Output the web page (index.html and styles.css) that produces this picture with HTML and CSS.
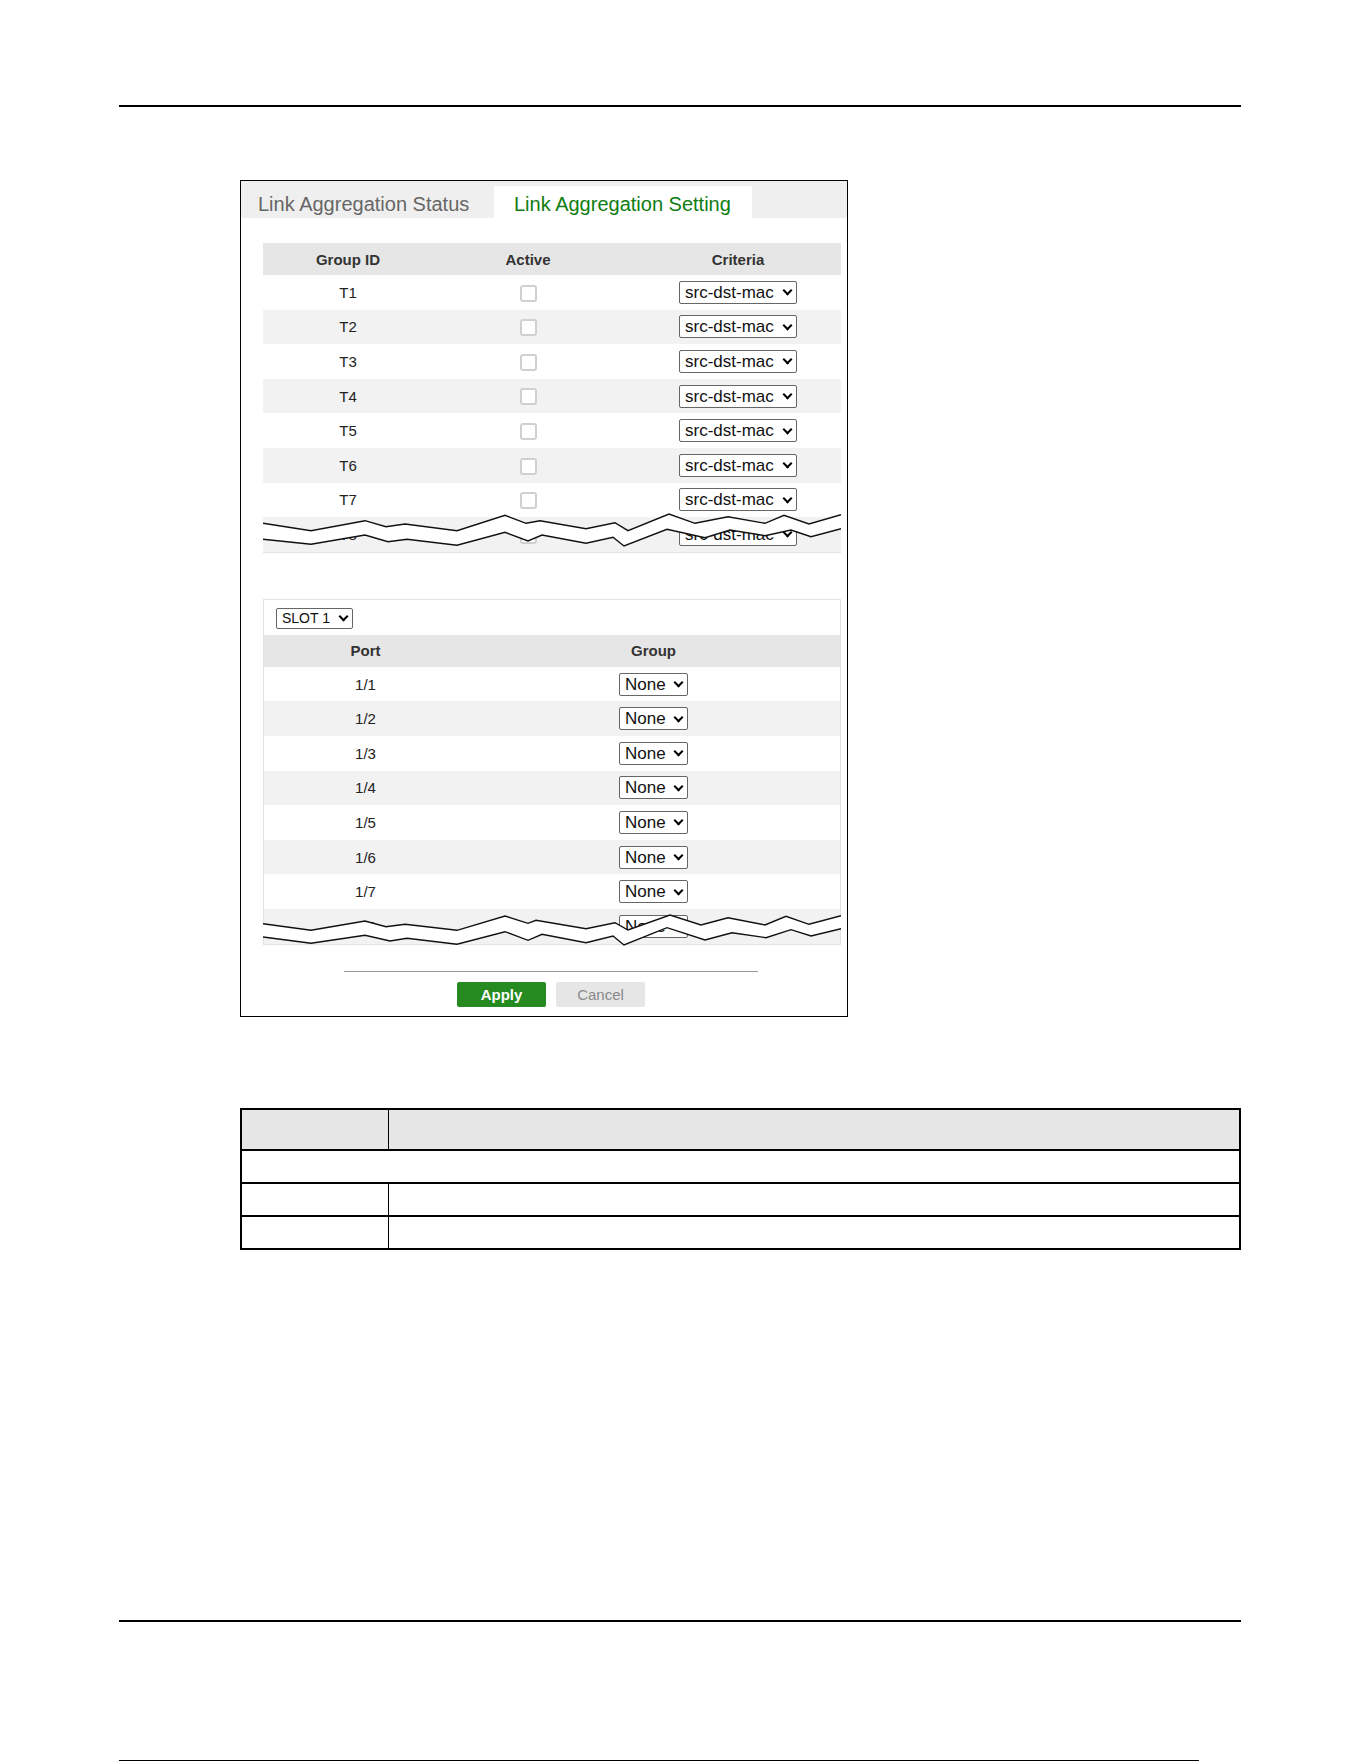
FILE: index.html
```html
<!DOCTYPE html>
<html lang="en">
<head>
  <meta charset="UTF-8">
  <meta name="viewport" content="width=device-width, initial-scale=1.0">
  <title>Link Aggregation Setting</title>
  <link rel="stylesheet" href="styles.css">
</head>
<body>

  <div class="page-rule top-rule"></div>

  <div class="screen">
    <div class="tabs">
      <div class="tab">Link Aggregation Status</div>
      <div class="tab active">Link Aggregation Setting</div>
    </div>

    <div class="screen-body">

      <div class="cut-wrap">
        <table class="grid criteria-grid">
          <colgroup><col class="c-id"><col class="c-active"><col></colgroup>
          <thead>
            <tr><th>Group ID</th><th>Active</th><th class="crit">Criteria</th></tr>
          </thead>
          <tbody>
            <tr><td>T1</td><td><input type="checkbox"></td><td class="crit"><span class="dropdown"><select class="criteria"><option>src-dst-mac</option></select></span></td></tr>
            <tr><td>T2</td><td><input type="checkbox"></td><td class="crit"><span class="dropdown"><select class="criteria"><option>src-dst-mac</option></select></span></td></tr>
            <tr><td>T3</td><td><input type="checkbox"></td><td class="crit"><span class="dropdown"><select class="criteria"><option>src-dst-mac</option></select></span></td></tr>
            <tr><td>T4</td><td><input type="checkbox"></td><td class="crit"><span class="dropdown"><select class="criteria"><option>src-dst-mac</option></select></span></td></tr>
            <tr><td>T5</td><td><input type="checkbox"></td><td class="crit"><span class="dropdown"><select class="criteria"><option>src-dst-mac</option></select></span></td></tr>
            <tr><td>T6</td><td><input type="checkbox"></td><td class="crit"><span class="dropdown"><select class="criteria"><option>src-dst-mac</option></select></span></td></tr>
            <tr><td>T7</td><td><input type="checkbox"></td><td class="crit"><span class="dropdown"><select class="criteria"><option>src-dst-mac</option></select></span></td></tr>
            <tr><td>T8</td><td><input type="checkbox"></td><td class="crit"><span class="dropdown"><select class="criteria"><option>src-dst-mac</option></select></span></td></tr>
          </tbody>
        </table>
        <!-- torn edge: the list goes on past T8 -->
        <svg class="tear" width="578" height="44" viewBox="0 0 578 44">
          <polygon class="tear-fill" points="0,13.3 48,20.7 102,10.7 123,16.7 142,14 194,20.7 242,5.3 263,13.3 277,10.7 323,18.7 352,12.7 365,20.7 406,4 432,13.3 465,6.7 502,13.3 521,5.3 546,14 578,4.7 578,18.7 548,26.7 528,20 502,25.7 467,20 442,27.7 404,19.3 361,36 350,27.3 323,33.3 279,25 265,31 242,22.3 194,35.3 144,29.3 125,31.7 102,25 48,34.3 0,29.3"/>
          <polyline class="tear-line" points="0,13.3 48,20.7 102,10.7 123,16.7 142,14 194,20.7 242,5.3 263,13.3 277,10.7 323,18.7 352,12.7 365,20.7 406,4 432,13.3 465,6.7 502,13.3 521,5.3 546,14 578,4.7"/>
          <polyline class="tear-line" points="0,29.3 48,34.3 102,25 125,31.7 144,29.3 194,35.3 242,22.3 265,31 279,25 323,33.3 350,27.3 361,36 404,19.3 442,27.7 467,20 502,25.7 528,20 548,26.7 578,18.7"/>
        </svg>
      </div>

      <div class="port-box">
        <div class="slot-bar">
          <span class="dropdown"><select class="slot"><option>SLOT 1</option></select></span>
        </div>
        <div class="cut-wrap">
          <table class="grid port-grid">
            <colgroup><col class="c-port"><col></colgroup>
            <thead>
              <tr><th>Port</th><th>Group</th></tr>
            </thead>
            <tbody>
              <tr><td>1/1</td><td><span class="dropdown"><select class="group"><option>None</option></select></span></td></tr>
              <tr><td>1/2</td><td><span class="dropdown"><select class="group"><option>None</option></select></span></td></tr>
              <tr><td>1/3</td><td><span class="dropdown"><select class="group"><option>None</option></select></span></td></tr>
              <tr><td>1/4</td><td><span class="dropdown"><select class="group"><option>None</option></select></span></td></tr>
              <tr><td>1/5</td><td><span class="dropdown"><select class="group"><option>None</option></select></span></td></tr>
              <tr><td>1/6</td><td><span class="dropdown"><select class="group"><option>None</option></select></span></td></tr>
              <tr><td>1/7</td><td><span class="dropdown"><select class="group"><option>None</option></select></span></td></tr>
              <tr><td>1/8</td><td><span class="dropdown"><select class="group"><option>None</option></select></span></td></tr>
            </tbody>
          </table>
          <svg class="tear tear-ports" width="578" height="44" viewBox="0 0 578 44">
            <polygon class="tear-fill" points="0,20.7 48,27.3 102,18 123,23.7 142,21.3 194,27.3 242,13 265,20.3 273,17.3 323,25.7 352,19.7 365,27 407,12 438,22 465,14.7 502,22 523,13.3 546,21.3 578,12.7 578,25.7 548,33 528,26.7 503,34.7 469,29.7 442,37 404,24.7 361,42 350,33 323,39.7 279,31.3 265,37.3 242,28.7 194,41.3 144,35.3 127,38 102,32.3 48,40.3 0,34"/>
            <polyline class="tear-line" points="0,20.7 48,27.3 102,18 123,23.7 142,21.3 194,27.3 242,13 265,20.3 273,17.3 323,25.7 352,19.7 365,27 407,12 438,22 465,14.7 502,22 523,13.3 546,21.3 578,12.7"/>
            <polyline class="tear-line" points="0,34 48,40.3 102,32.3 127,38 144,35.3 194,41.3 242,28.7 265,37.3 279,31.3 323,39.7 350,33 361,42 404,24.7 442,37 469,29.7 503,34.7 528,26.7 548,33 578,25.7"/>
          </svg>
        </div>
      </div>

      <div class="actions-rule"></div>
      <div class="actions">
        <button class="btn apply">Apply</button>
        <button class="btn cancel">Cancel</button>
      </div>
    </div>
  </div>

  <table class="desc-table">
    <colgroup><col class="d-label"><col></colgroup>
    <thead>
      <tr><th></th><th></th></tr>
    </thead>
    <tbody>
      <tr><td colspan="2"></td></tr>
      <tr><td></td><td></td></tr>
      <tr><td></td><td></td></tr>
    </tbody>
  </table>

  <div class="page-rule bottom-rule"></div>
  <div class="page-edge"></div>

</body>
</html>
```

FILE: styles.css
```css
body {
  margin: 0;
  font-family: "Liberation Sans", Arial, sans-serif;
  color: #222;
  background: #fff;
}

/* page header / footer rules */
.page-rule {
  border-top: 2px solid #000;
  margin-left: 119px;
  width: 1122px;
}

.top-rule {
  margin-top: 105px;
}

.bottom-rule {
  margin-top: 370px;
}

.page-edge {
  margin: 138px 0 0 119px;
  width: 1080px;
  border-top: 1px solid #000;
}

/* captured screen */
.screen {
  width: 608px;
  box-sizing: border-box;
  margin: 73px 0 0 240px;
  border: 1px solid #000;
}

.tabs {
  display: flex;
  align-items: flex-end;
  height: 37px;
  background-color: #efefef;
}

.tab {
  height: 32px;
  line-height: 36px;
  font-size: 20px;
  color: #666;
  box-sizing: border-box;
  white-space: nowrap;
}

.tab:first-child {
  width: 253px;
  padding-left: 17px;
}

.tab.active {
  width: 258px;
  padding-left: 20px;
  background-color: #fff;
  color: #0f7d12;
}

.screen-body {
  padding: 25px 6px 9px 22px;
}

.cut-wrap {
  position: relative;
}

.grid {
  width: 100%;
  border-collapse: collapse;
  table-layout: fixed;
  font-size: 15px;
}

.grid th {
  height: 32px;
  padding: 0;
  background-color: #e6e6e6;
  font-weight: bold;
  color: #333;
  text-align: center;
}

.grid td {
  height: 34.6px;
  padding: 0;
  text-align: center;
  color: #222;
}

.grid tbody tr:nth-child(even) {
  background-color: #f2f2f2;
}

.criteria-grid {
  border-bottom: 1px solid #e2e2e2;
}

.c-id {
  width: 170px;
}

.c-active {
  width: 190px;
}

.grid .crit {
  padding-left: 12px;
}

.c-port {
  width: 203px;
}

input[type="checkbox"] {
  appearance: none;
  -webkit-appearance: none;
  width: 17px;
  height: 17px;
  margin: 0;
  border: 2px solid #d0d0d0;
  border-radius: 3px;
  background: #fff;
  vertical-align: middle;
}

/* select boxes with the small bold chevron */
.dropdown {
  position: relative;
  display: inline-block;
  vertical-align: middle;
}

.dropdown::after {
  content: "";
  position: absolute;
  right: 6px;
  top: 50%;
  width: 5px;
  height: 5px;
  margin-top: -5px;
  border-right: 2px solid #000;
  border-bottom: 2px solid #000;
  transform: rotate(45deg);
  pointer-events: none;
}

select {
  appearance: none;
  -webkit-appearance: none;
  display: block;
  box-sizing: border-box;
  height: 23px;
  margin: 0;
  padding: 0 0 0 5px;
  border: 1px solid #666;
  border-radius: 2px;
  background: #fff;
  font-family: "Liberation Sans", Arial, sans-serif;
  font-size: 17px;
  color: #111;
}

select.criteria {
  width: 118px;
}

select.group {
  width: 69px;
  padding-left: 5px;
}

select.slot {
  width: 77px;
  height: 21px;
  font-size: 14px;
  padding-left: 5px;
}

/* torn-off edge over the last row */
.tear {
  position: absolute;
  left: 0;
  top: 267px;
}

.tear-ports {
  left: -1px;
  top: 268px;
}

.tear-fill {
  fill: #fff;
}

.tear-line {
  fill: none;
  stroke: #111;
  stroke-width: 1.4;
}

.port-box {
  margin-top: 46px;
  border: 1px solid #e2e2e2;
}

.slot-bar {
  padding: 8px 0 6px 12px;
}

.actions-rule {
  margin: 26px 0 0 81px;
  width: 414px;
  border-top: 1px solid #9a9a9a;
}

.actions {
  display: flex;
  justify-content: center;
  gap: 10px;
  width: 414px;
  margin: 10px 0 0 81px;
}

.btn {
  width: 89px;
  height: 25px;
  padding: 0;
  border: none;
  border-radius: 2px;
  font-family: "Liberation Sans", Arial, sans-serif;
  font-size: 15px;
  cursor: pointer;
}

.apply {
  background-color: #258a1f;
  color: #fff;
  font-weight: bold;
}

.cancel {
  background-color: #e6e6e6;
  color: #8a8a8a;
}

/* field description table */
.desc-table {
  margin: 91px 0 0 240px;
  width: 1001px;
  border-collapse: collapse;
  border: 2px solid #000;
}

.d-label {
  width: 147px;
}

.desc-table th,
.desc-table td {
  padding: 0;
  border-top: 2px solid #000;
  border-bottom: 2px solid #000;
  border-left: 1px solid #000;
}

.desc-table th {
  height: 39px;
  background-color: #e6e6e6;
}

.desc-table td {
  height: 31px;
}
```
